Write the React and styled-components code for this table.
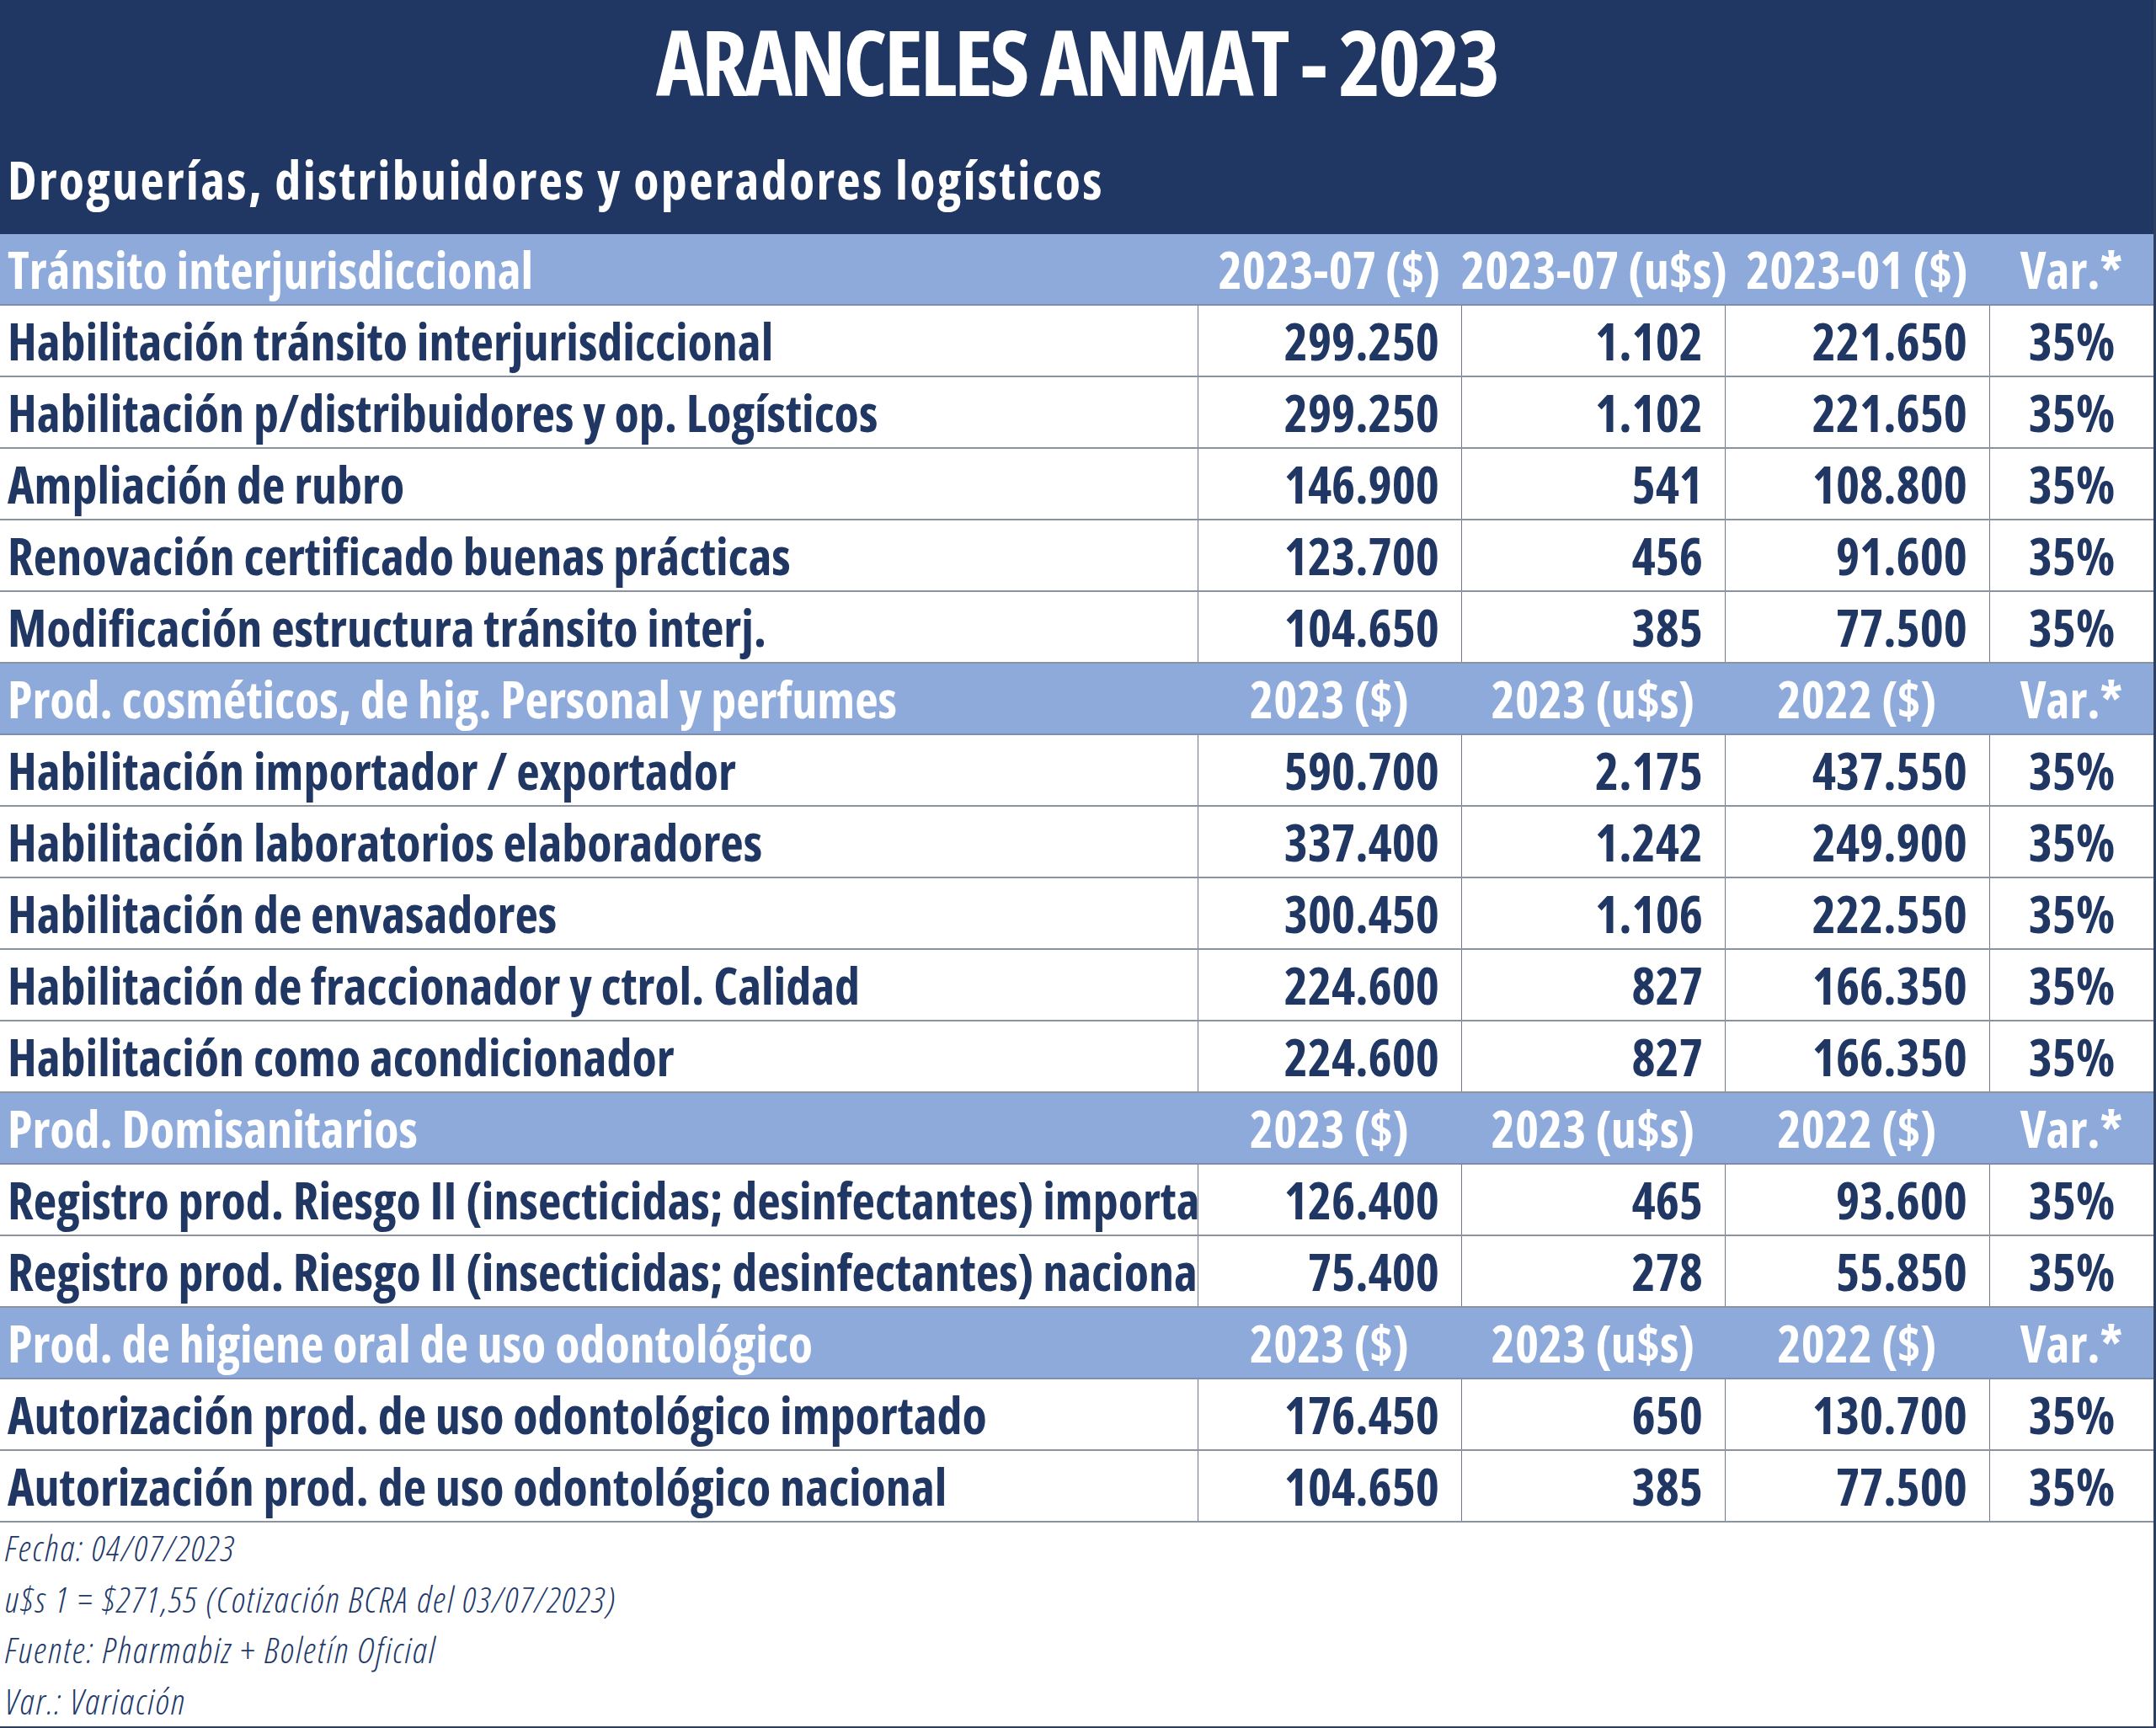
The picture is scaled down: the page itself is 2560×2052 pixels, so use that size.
import React from "react";
import styled, { createGlobalStyle } from "styled-components";

const NAVY = "#213763";
const LIGHT = "#8eaadb";
const INK = "#203764";

const GlobalStyle = createGlobalStyle`
  html, body { margin: 0; padding: 0; background: #ffffff; }
  * { box-sizing: border-box; }
`;

const Sheet = styled.div`
  width: 2560px;
  height: 2052px;
  background: #ffffff;
  border-right: 3px solid #2c3f60;
  border-bottom: 2px solid #2c3f60;
  font-family: "Open Sans", "Liberation Sans", sans-serif;
  font-stretch: 75%;
  color: ${INK};
  overflow: hidden;
  display: flex;
  flex-direction: column;
`;

const Banner = styled.header`
  height: 278px;
  background: ${NAVY};
  color: #ffffff;
  padding-top: 8px;
  display: flex;
  flex-direction: column;
`;

const Title = styled.h1`
  margin: 0;
  font-size: 108px;
  line-height: 148px;
  margin-top: -9px;
  font-weight: 700;
  text-align: center;
  letter-spacing: -3.5px;
`;

const Subtitle = styled.h2`
  margin: 24px 0 0 0;
  padding-left: 9px;
  font-size: 62px;
  letter-spacing: 2.3px;
  line-height: 85px;
  font-weight: 700;
  white-space: nowrap;
`;

const Table = styled.section`
  display: flex;
  flex-direction: column;
`;

const Row = styled.div`
  display: grid;
  grid-template-columns: 1422px 313px 313px 314px 1fr;
  height: 85px;
  background: ${(p) => (p.$head ? LIGHT : "#ffffff")};
  color: ${(p) => (p.$head ? "#ffffff" : INK)};
  border-bottom: 2px solid ${(p) => (p.$head ? "#7c8db0" : "#8b949e")};
  font-size: 60px;
  font-weight: 700;
  line-height: 82px;
`;

const Label = styled.div`
  padding: 1px 0 0 9px;
  white-space: nowrap;
  overflow: hidden;
`;

const HeadCell = styled.div`
  padding-top: 1px;
  text-align: center;
  white-space: nowrap;
`;

const Value = styled.div`
  padding-top: 1px;
  padding-right: ${(p) => (p.$center ? "0" : "26px")};
  text-align: ${(p) => (p.$center ? "center" : "right")};
  border-left: 1px solid #6d7987;
  white-space: nowrap;
`;

const Notes = styled.footer`
  padding-left: 6px;
  font-size: 43px;
  letter-spacing: 2px;
  line-height: 60.5px;
  font-style: italic;
  font-weight: 300;
  color: #22396a;
`;

const Note = styled.div`
  white-space: nowrap;
`;

const sections = [
  {
    title: "Tránsito interjurisdiccional",
    cols: ["2023-07 ($)", "2023-07 (u$s)", "2023-01 ($)", "Var.*"],
    rows: [
      ["Habilitación tránsito interjurisdiccional", "299.250", "1.102", "221.650", "35%"],
      ["Habilitación p/distribuidores y op. Logísticos", "299.250", "1.102", "221.650", "35%"],
      ["Ampliación de rubro", "146.900", "541", "108.800", "35%"],
      ["Renovación certificado buenas prácticas", "123.700", "456", "91.600", "35%"],
      ["Modificación estructura tránsito interj.", "104.650", "385", "77.500", "35%"],
    ],
  },
  {
    title: "Prod. cosméticos, de hig. Personal y perfumes",
    cols: ["2023 ($)", "2023 (u$s)", "2022 ($)", "Var.*"],
    rows: [
      ["Habilitación importador / exportador", "590.700", "2.175", "437.550", "35%"],
      ["Habilitación laboratorios elaboradores", "337.400", "1.242", "249.900", "35%"],
      ["Habilitación de envasadores", "300.450", "1.106", "222.550", "35%"],
      ["Habilitación de fraccionador y ctrol. Calidad", "224.600", "827", "166.350", "35%"],
      ["Habilitación como acondicionador", "224.600", "827", "166.350", "35%"],
    ],
  },
  {
    title: "Prod. Domisanitarios",
    cols: ["2023 ($)", "2023 (u$s)", "2022 ($)", "Var.*"],
    rows: [
      ["Registro prod. Riesgo II (insecticidas; desinfectantes) importados", "126.400", "465", "93.600", "35%"],
      ["Registro prod. Riesgo II (insecticidas; desinfectantes) nacionales", "75.400", "278", "55.850", "35%"],
    ],
  },
  {
    title: "Prod. de higiene oral de uso odontológico",
    cols: ["2023 ($)", "2023 (u$s)", "2022 ($)", "Var.*"],
    rows: [
      ["Autorización prod. de uso odontológico importado", "176.450", "650", "130.700", "35%"],
      ["Autorización prod. de uso odontológico nacional", "104.650", "385", "77.500", "35%"],
    ],
  },
];

const notes = [
  "Fecha: 04/07/2023",
  "u$s 1 = $271,55 (Cotización BCRA del 03/07/2023)",
  "Fuente: Pharmabiz + Boletín Oficial",
  "Var.: Variación",
];

export default function App() {
  return (
    <>
      <GlobalStyle />
      <Sheet>
        <Banner>
          <Title>ARANCELES ANMAT - 2023</Title>
          <Subtitle>Droguerías, distribuidores y operadores logísticos</Subtitle>
        </Banner>
        <Table>
          {sections.map((s) => (
            <React.Fragment key={s.title}>
              <Row $head>
                <Label>{s.title}</Label>
                {s.cols.map((c) => (
                  <HeadCell key={c}>{c}</HeadCell>
                ))}
              </Row>
              {s.rows.map((r) => (
                <Row key={r[0]}>
                  <Label>{r[0]}</Label>
                  <Value>{r[1]}</Value>
                  <Value>{r[2]}</Value>
                  <Value>{r[3]}</Value>
                  <Value $center>{r[4]}</Value>
                </Row>
              ))}
            </React.Fragment>
          ))}
        </Table>
        <Notes>
          {notes.map((n) => (
            <Note key={n}>{n}</Note>
          ))}
        </Notes>
      </Sheet>
    </>
  );
}
